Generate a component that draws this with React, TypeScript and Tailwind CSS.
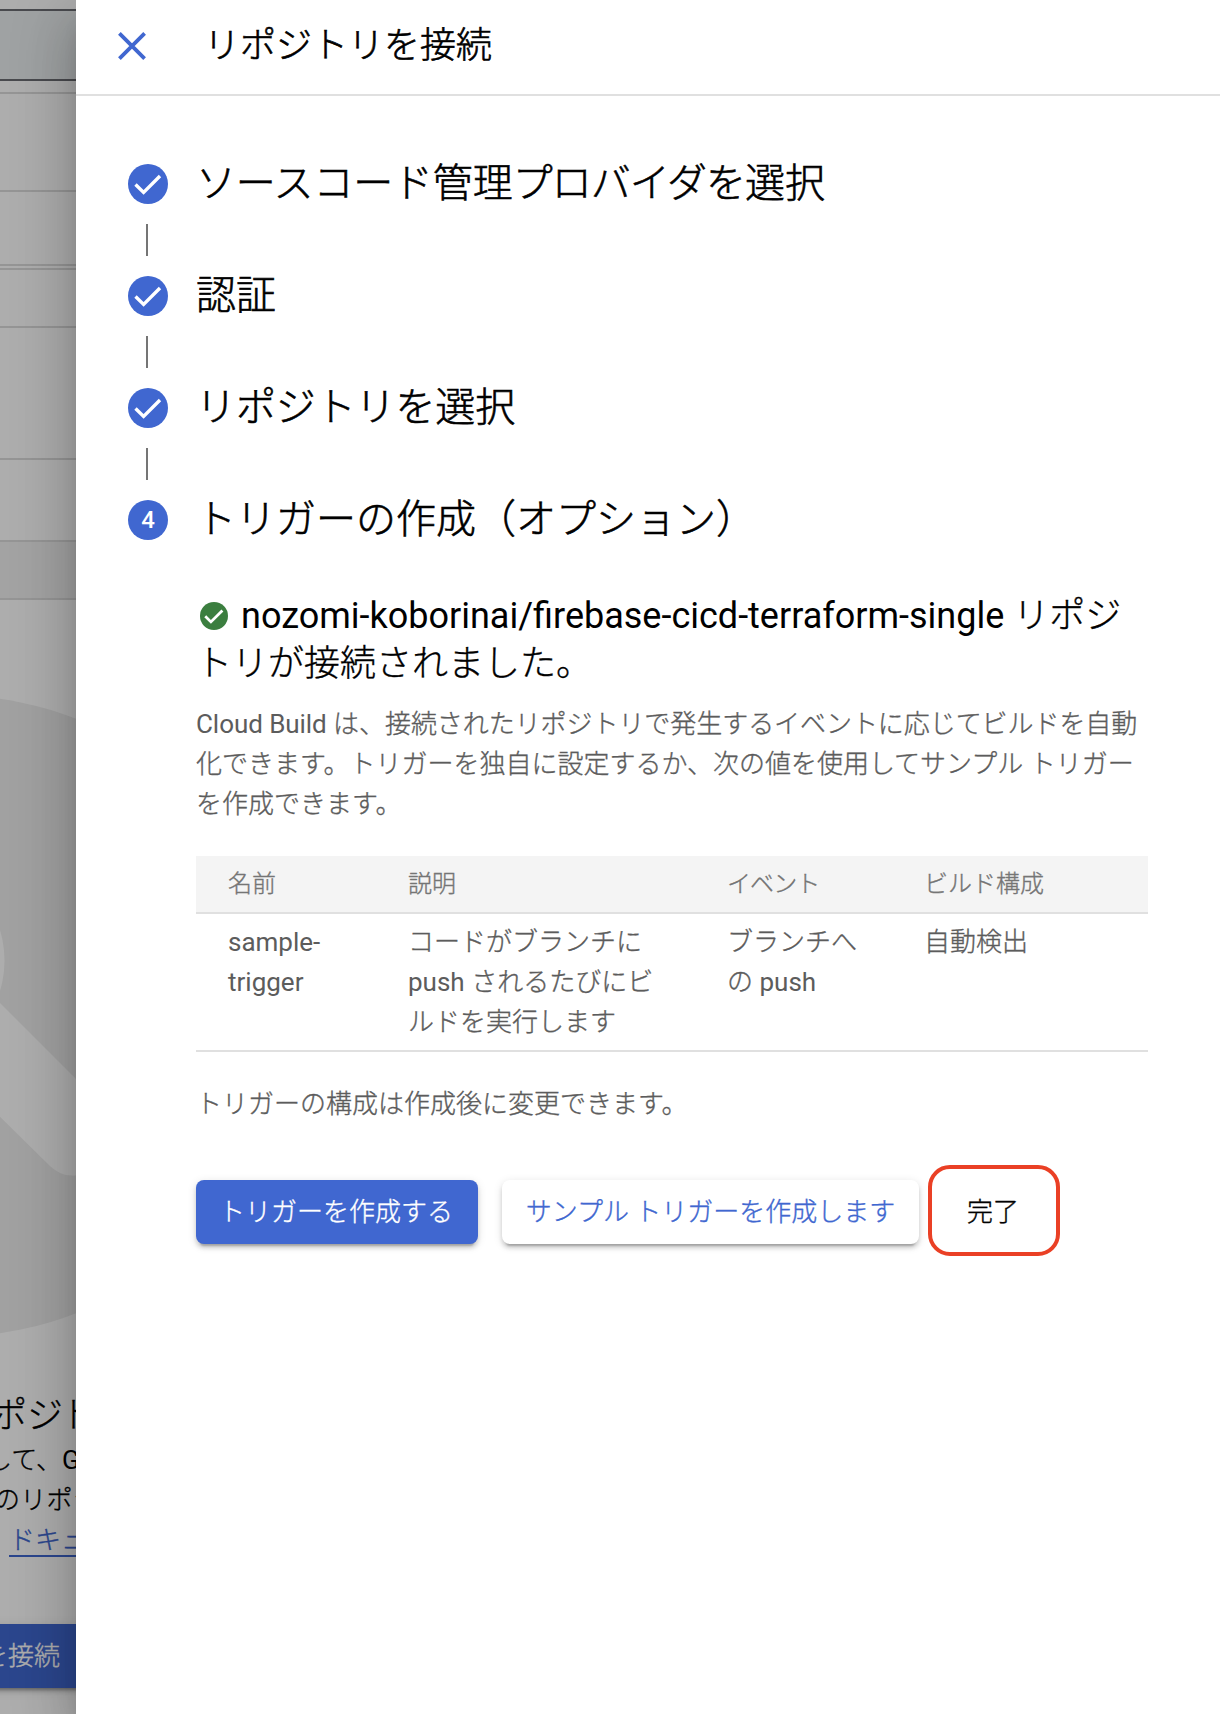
import React from "react";

const steps: { parts: [string, string][] }[] = [
  { parts: [["ソースコード", "tracking-[-0.2px]"], ["管理", ""], ["プロバイダを", "tracking-[-1.05px]"], ["選択", ""]] },
  { parts: [["認証", ""]] },
  { parts: [["リポジトリを選択", "tracking-[-0.12px]"]] },
  { parts: [["トリガーの作成（オプション）", ""]] },
];

function Check({ className, stroke }: { className: string; stroke: number }) {
  return (
    <svg viewBox="0 0 40 40" className={className} fill="none">
      <circle cx="20" cy="20" r="20" fill="currentColor" />
      <path d="M7.5 20.5 L15.6 28.4 L32 12" stroke="white" strokeWidth={stroke} />
    </svg>
  );
}

/** Japanese run, set a little lighter than the Latin text around it. */
function Ja({ children }: { children: React.ReactNode }) {
  return <span className="font-light [-webkit-text-stroke:0.35px_currentColor]">{children}</span>;
}

function Backdrop() {
  return (
    <aside className="relative h-[1714px] w-[76px] shrink-0 overflow-hidden bg-white">
      <div className="flex h-full w-[300px] flex-col">
        <div className="mt-[9px] h-[72px] border-y-2 border-[#6c6e74] bg-[#ebeff1]" />
        <div className="mt-[11px] h-[100px] border-y-2 border-[#dcdcdc]" />
        <div className="h-[74px] border-b-2 border-[#dcdcdc]" />
        <div className="mt-0.5 h-[60px] border-y-2 border-[#dcdcdc]" />
        <div className="h-[132px] border-b-2 border-[#dcdcdc]" />
        <div className="h-[82px] border-b-2 border-[#dcdcdc]" />
        <div className="h-[58px] border-b-2 border-[#dcdcdc] bg-[#f1f1f1]" />
        <svg viewBox="0 690 76 650" className="mt-[90px] h-[650px] w-[76px] shrink-0">
          <circle cx="-42.8" cy="1016" r="320" fill="#eeeeee" />
          <circle cx="-100" cy="960.5" r="104.5" fill="#ffffff" />
          <path d="M-10 993 L100 1103 V1175.6 H72 Q60 1175.6 50 1166 L-10 1107 Z" fill="#ffffff" />
        </svg>
        <div className="mt-[52px] -ml-[9px] h-[48px] text-[36px] leading-[48px] whitespace-nowrap"><Ja>ポ<span className="tracking-[-3px]">ジ</span>トリ</Ja></div>
        <div className="-ml-[14px] h-10 text-[26px] leading-10 whitespace-nowrap"><Ja>して、</Ja>GitHub</div>
        <div className="-ml-[6px] h-10 text-[26px] leading-10 tracking-[0.3px] whitespace-nowrap"><Ja>のリポジトリ</Ja></div>
        <div className="ml-[9px] h-[37px] border-b-2 border-[#4067d0] text-[26px] leading-10 whitespace-nowrap text-[#4067d0]"><Ja>ドキュメント</Ja></div>
        <div className="mt-[67px] -ml-[18px] h-16 bg-[#4067d0] text-[26px] leading-16 whitespace-nowrap text-white shadow-[0_6px_2px_-4px_rgba(0,0,0,0.2),0_4px_4px_rgba(0,0,0,0.14),0_2px_10px_rgba(0,0,0,0.12)]"><Ja>を接続</Ja></div>
      </div>
      <div className="absolute inset-0 bg-black/32" />
    </aside>
  );
}

export default function App() {
  return (
    <div className="flex h-[1714px] w-[1220px] overflow-hidden bg-white font-[Roboto,'Noto_Sans_CJK_JP',sans-serif] text-black">
      <Backdrop />
      <main className="relative z-10 flex-1 bg-white shadow-[0_16px_20px_-10px_rgba(0,0,0,0.2),0_32px_48px_4px_rgba(0,0,0,0.14),0_12px_60px_10px_rgba(0,0,0,0.12)]">
        <header className="flex h-24 items-center border-b-2 border-[#e0e0e0] pl-[42px]">
          <svg viewBox="0 0 28 28" className="mt-[-2px] size-7" fill="none" stroke="#4067d0" strokeWidth="3.8">
            <path d="M1.4 1.4 L26.6 26.6 M26.6 1.4 L1.4 26.6" />
          </svg>
          <h1 className="-mt-[2px] ml-[58px] text-[36px] leading-[48px] font-light [-webkit-text-stroke:0.6px_black]">リポジトリを接続</h1>
        </header>

        <ol className="pt-[68px] pl-[52px]">
          {steps.map((s, i) => (
            <li key={i}>
              <div className="flex h-10 items-center gap-7">
                {i < 3 ? (
                  <Check className="size-10 text-[#4067d0]" stroke={3.4} />
                ) : (
                  <span className="flex size-10 items-center justify-center rounded-full bg-[#4067d0] text-[24px] font-medium text-white">4</span>
                )}
                <h2 className="text-[40px] leading-[48px] font-light whitespace-nowrap [-webkit-text-stroke:0.6px_black]">
                  {s.parts.map(([text, spacing]) => (
                    <span key={text} className={spacing}>{text}</span>
                  ))}
                </h2>
              </div>
              {i < 3 && <div className="my-5 ml-[18px] h-8 w-0.5 bg-[#757575]" />}
            </li>
          ))}
        </ol>

        <section className="mt-[52px] ml-[120px] w-[952px] text-[26px] leading-10 text-[#5c5c5c]">
          <h3 className="text-[36px] leading-[48px] whitespace-nowrap text-black">
            <Check className="mr-[13px] ml-1 inline-block size-7 align-[-2px] text-[#3b7e3f]" stroke={4} />
            nozomi-koborinai/firebase-cicd-terraform-single <Ja>リポジ</Ja>
            <br />
            <Ja>トリが接続されました。</Ja>
          </h3>
          <p className="mt-4 whitespace-nowrap">
            <span className="tracking-[-0.06px]">Cloud Build <Ja>は、接続されたリポジトリで発生するイベントに応じてビルドを自動</Ja></span>
            <br />
            <Ja>化できます。トリガーを独自に設定するか、次の値を使用してサンプル トリガー</Ja>
            <br />
            <Ja>を作成できます。</Ja>
          </p>

          <div className="mt-8">
            <div className="grid h-[58px] grid-cols-[180px_319px_197px_1fr] items-center border-b-2 border-[#e0e0e0] bg-[#f4f4f4] pl-8 text-[24px] text-[#757575]">
              <span><Ja>名前</Ja></span>
              <span><Ja>説明</Ja></span>
              <span className="tracking-[-0.9px]"><Ja>イベント</Ja></span>
              <span><Ja>ビルド構成</Ja></span>
            </div>
            <div className="grid h-[138px] grid-cols-[180px_319px_197px_1fr] border-b-2 border-[#e0e0e0] pt-2 pl-8">
              <span>sample-<br />trigger</span>
              <span><Ja>コードがブランチに</Ja><br />push <Ja>されるたびにビ</Ja><br /><Ja>ルドを実行します</Ja></span>
              <span><Ja>ブランチへ</Ja><br /><Ja>の</Ja> push</span>
              <span><Ja>自動検出</Ja></span>
            </div>
          </div>

          <p className="mt-8"><Ja>トリガーの構成は作成後に変更できます。</Ja></p>

          <div className="mt-[41px] flex items-start">
            <button className="mt-[15px] h-16 w-[282px] rounded-lg bg-[#4067d0] pr-[2px] whitespace-nowrap text-white shadow-[0_6px_2px_-4px_rgba(0,0,0,0.2),0_4px_4px_rgba(0,0,0,0.14),0_2px_10px_rgba(0,0,0,0.12)]"><Ja>トリガーを作成する</Ja></button>
            <button className="mt-[15px] ml-6 h-16 w-[417px] rounded-lg bg-white whitespace-nowrap text-[#4067d0] shadow-[0_6px_2px_-4px_rgba(0,0,0,0.2),0_4px_4px_rgba(0,0,0,0.14),0_2px_10px_rgba(0,0,0,0.12)]"><Ja>サンプル トリガーを作成します</Ja></button>
            <button className="ml-[9px] h-[91px] w-[132px] rounded-[22px] border-4 border-[#ea4025] pt-[3px] pr-[2px] text-black"><Ja>完了</Ja></button>
          </div>
        </section>
      </main>
    </div>
  );
}
